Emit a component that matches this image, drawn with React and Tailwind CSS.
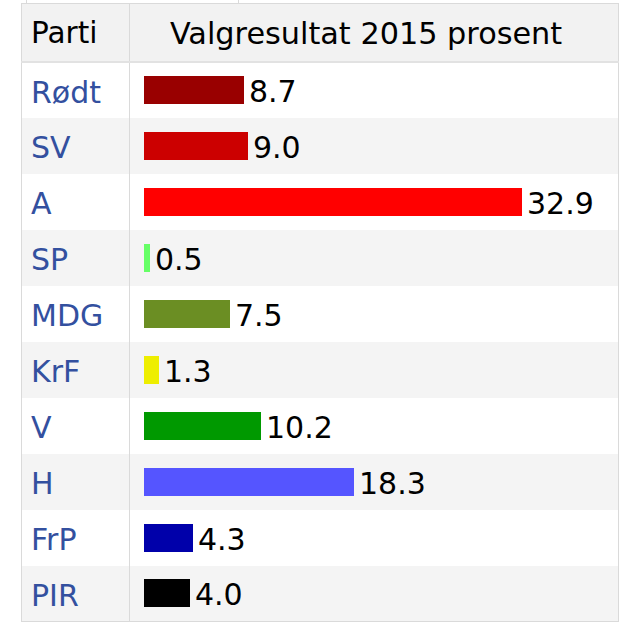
import React from 'react';

const rows = [
    { parti: 'Rødt', value: 8.7, color: '#990000' },
    { parti: 'SV', value: 9.0, color: '#cc0000' },
    { parti: 'A', value: 32.9, color: '#ff0000' },
    { parti: 'SP', value: 0.5, color: '#66ff66' },
    { parti: 'MDG', value: 7.5, color: '#6b8e23' },
    { parti: 'KrF', value: 1.3, color: '#eeee00' },
    { parti: 'V', value: 10.2, color: '#009900' },
    { parti: 'H', value: 18.3, color: '#5555ff' },
    { parti: 'FrP', value: 4.3, color: '#0000aa' },
    { parti: 'PIR', value: 4.0, color: '#000000' },
];

// px per prosentpoeng
const SCALE = 11.5;

export default function App() {
    return (
        <div className="bg-white h-[623px] overflow-hidden text-black" style={{ fontFamily: '"DejaVu Sans", Verdana, sans-serif' }}>
            <div className="h-[3px] ml-[26px] w-[213px] border-x border-[#dadada]" />
            <table className="ml-[21px] w-[598px] border-collapse border border-[#dadada]">
                <thead>
                    <tr className="bg-[#f2f2f2] border-b-2 border-[#e2e2e2]">
                        <th className="h-[58px] w-[108px] p-0 pt-[2px] pl-[9px] text-left font-normal text-[29.5px] border-r border-[#dadada]">
                            Parti
                        </th>
                        <th className="h-[58px] p-0 pt-[2px] pl-[40px] text-left font-normal text-[30.3px]">
                            Valgresultat 2015 prosent
                        </th>
                    </tr>
                </thead>
                <tbody>
                    {rows.map((row, i) => (
                        <tr key={row.parti} className={i % 2 === 0 ? 'bg-white' : 'bg-[#f4f4f4]'}>
                            <td className="h-[56px] p-0 pt-[4px] pl-[9px] text-[30px] text-[#33509f] border-r border-[#dadada]">
                                {row.parti}
                            </td>
                            <td className="h-[56px] p-0 pl-[14px]">
                                <div className="flex items-center gap-[5px]">
                                    <div className="h-[28px]" style={{ width: Math.round(row.value * SCALE), backgroundColor: row.color }} />
                                    <span className="pt-[3px] text-[30px]">{row.value.toFixed(1)}</span>
                                </div>
                            </td>
                        </tr>
                    ))}
                </tbody>
            </table>
        </div>
    );
}
